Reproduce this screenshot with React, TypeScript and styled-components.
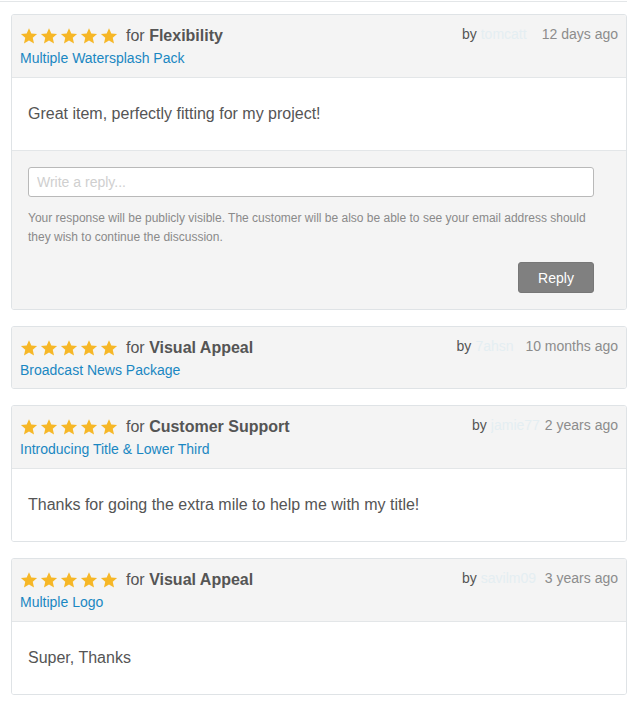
import styled, { createGlobalStyle } from 'styled-components';

type Review = {
    category: string;
    item: string;
    author: string;
    authorWidth: number;
    when: string;
    comment?: string;
    replyBox?: boolean;
};

const reviews: Review[] = [
    {
        category: 'Flexibility',
        item: 'Multiple Watersplash Pack',
        author: 'tomcatt',
        authorWidth: 59,
        when: '12 days ago',
        comment: 'Great item, perfectly fitting for my project!',
        replyBox: true,
    },
    {
        category: 'Visual Appeal',
        item: 'Broadcast News Package',
        author: '7ahsn',
        authorWidth: 48,
        when: '10 months ago',
    },
    {
        category: 'Customer Support',
        item: 'Introducing Title & Lower Third',
        author: 'jamie77',
        authorWidth: 52,
        when: '2 years ago',
        comment: 'Thanks for going the extra mile to help me with my title!',
    },
    {
        category: 'Visual Appeal',
        item: 'Multiple Logo',
        author: 'savilm09',
        authorWidth: 62,
        when: '3 years ago',
        comment: 'Super, Thanks',
    },
];

const GlobalStyle = createGlobalStyle`
    body {
        margin: 0;
        background: #fff;
        font-family: "Liberation Sans", Arial, sans-serif;
        color: #555;
    }
`;

const Page = styled.div`
    padding: 0 13px 0 11px;
`;

const TopRule = styled.div`
    height: 1px;
    margin: 1px 0 12px -11px;
    background: #e3e6e8;
`;

const Card = styled.div`
    border: 1px solid #dfe3e6;
    border-radius: 3px;
    margin-bottom: 16px;
    overflow: hidden;
`;

const Header = styled.div`
    display: flex;
    justify-content: space-between;
    background: #f4f4f4;
    padding: 9px 8px 9px 8px;

    &:last-child {
        padding-bottom: 8px;
    }
`;

const HeaderLeft = styled.div`
    display: flex;
    flex-direction: column;
`;

const TitleRow = styled.div`
    display: flex;
    align-items: center;
    height: 24px;
`;

const Stars = styled.div`
    display: flex;
    gap: 2px;
    margin-right: 8px;
`;

const Title = styled.span`
    font-size: 16px;
    color: #555;

    b {
        font-weight: 700;
    }
`;

const ItemLink = styled.a`
    font-size: 14px;
    line-height: 20px;
    color: #1a87c2;
    text-decoration: none;
`;

const Meta = styled.div`
    font-size: 14px;
    line-height: 20px;
    color: #8c8c8c;
    white-space: nowrap;
`;

const By = styled.span`
    color: #555;
`;

const Author = styled.span<{ $w: number }>`
    display: inline-block;
    width: ${p => p.$w}px;
    overflow: hidden;
    vertical-align: top;
    color: #e4eef2;
    margin: 0 2px 0 4px;
`;

const Body = styled.div`
    background: #fff;
    border-top: 1px solid #e3e6e8;
    padding: 24px 16px 24px;
    font-size: 16px;
    line-height: 24px;
    color: #555;
`;

const ReplyArea = styled.div`
    background: #f4f4f4;
    border-top: 1px solid #e3e6e8;
    padding: 16px 32px 16px 16px;
    display: flex;
    flex-direction: column;
`;

const ReplyInput = styled.input`
    height: 30px;
    box-sizing: border-box;
    border: 1px solid #b9b9b9;
    border-radius: 3px;
    padding: 0 8px;
    font-family: inherit;
    font-size: 14px;
    background: #fff;

    &::placeholder {
        color: #cfcfcf;
    }
`;

const Notice = styled.p`
    margin: 12px 0 15px;
    font-size: 12px;
    line-height: 19px;
    color: #8a8a8a;
`;

const ReplyButton = styled.button`
    align-self: flex-end;
    width: 76px;
    height: 31px;
    border: 1px solid #777;
    border-radius: 3px;
    background: #808080;
    color: #fff;
    font-family: inherit;
    font-size: 14px;
`;

const Star = () => (
    <svg width="18" height="18" viewBox="0 0 24 24">
        <path
            fill="#f6b727"
            d="M12 1.5l3.1 7.1 7.7.7-5.8 5.1 1.7 7.6L12 18l-6.7 4 1.7-7.6-5.8-5.1 7.7-.7z"
        />
    </svg>
);

const ReviewCard = ({ review }: { review: Review }) => (
    <Card>
        <Header>
            <HeaderLeft>
                <TitleRow>
                    <Stars>
                        {[0, 1, 2, 3, 4].map(i => (
                            <Star key={i} />
                        ))}
                    </Stars>
                    <Title>
                        for <b>{review.category}</b>
                    </Title>
                </TitleRow>
                <ItemLink href="#">{review.item}</ItemLink>
            </HeaderLeft>
            <Meta>
                <By>by</By>
                <Author $w={review.authorWidth}>{review.author}</Author>
                {review.when}
            </Meta>
        </Header>
        {review.comment && <Body>{review.comment}</Body>}
        {review.replyBox && (
            <ReplyArea>
                <ReplyInput placeholder="Write a reply..." />
                <Notice>
                    Your response will be publicly visible. The customer will be also be able to see
                    your email address should they wish to continue the discussion.
                </Notice>
                <ReplyButton>Reply</ReplyButton>
            </ReplyArea>
        )}
    </Card>
);

export default function App() {
    return (
        <>
            <GlobalStyle />
            <Page>
                <TopRule />
                {reviews.map((r, i) => (
                    <ReviewCard key={i} review={r} />
                ))}
            </Page>
        </>
    );
}
